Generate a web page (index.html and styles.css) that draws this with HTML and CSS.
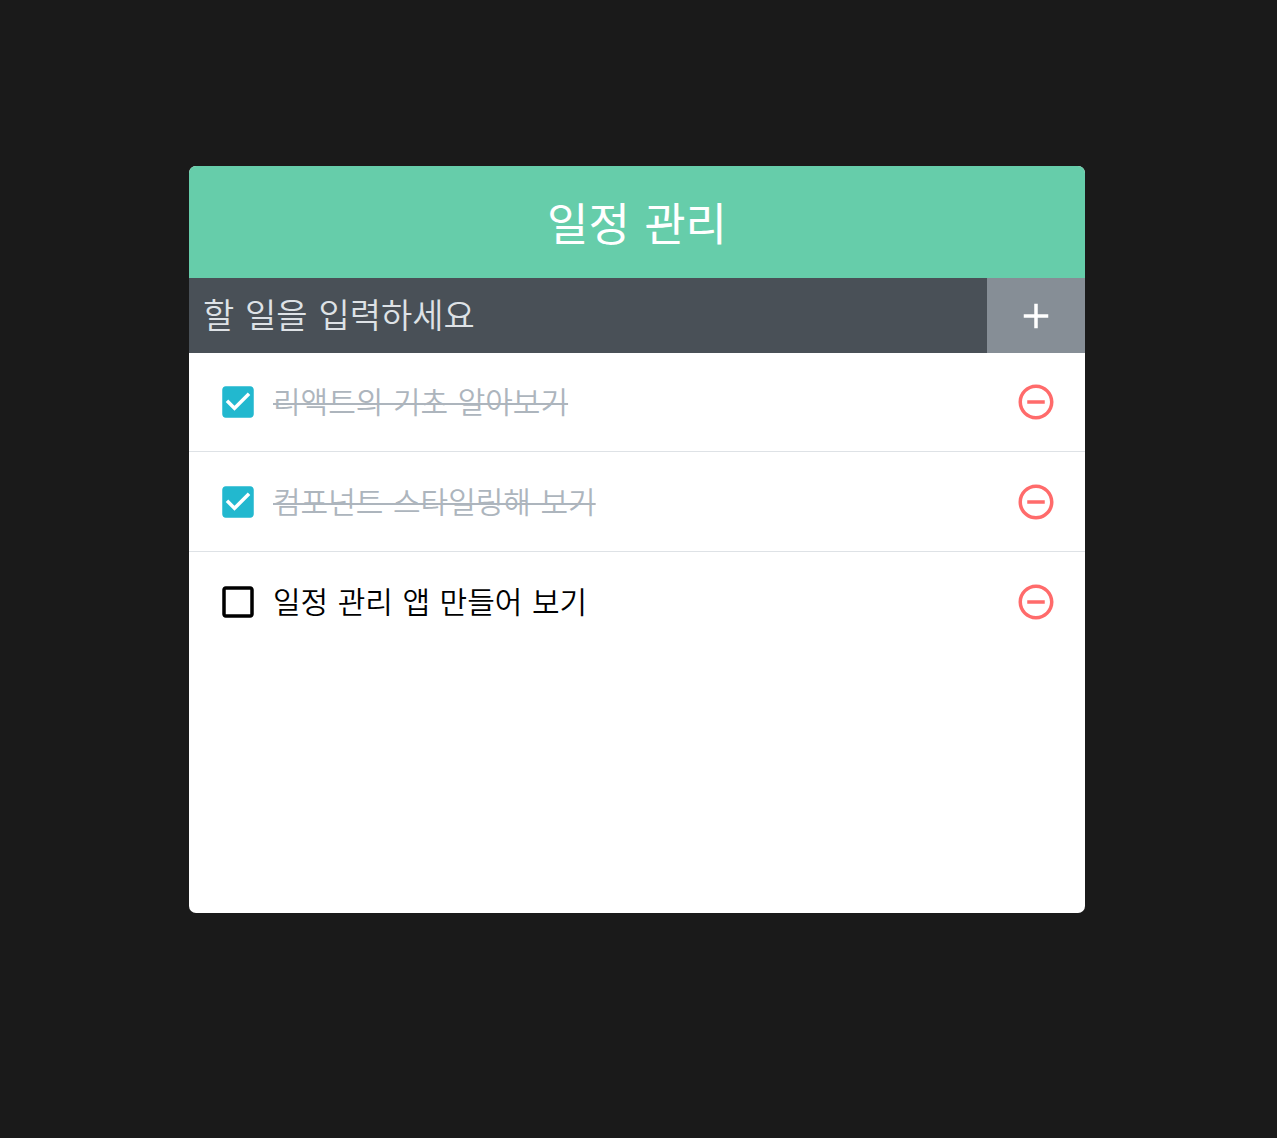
FILE: index.html
```html
<!DOCTYPE html>
<html lang="ko">
<head>
<meta charset="utf-8">
<meta name="viewport" content="width=device-width, initial-scale=1">
<title>일정 관리</title>
<link rel="stylesheet" href="styles.css">
</head>
<body>
<main class="todo-template">
  <h1 class="app-title">일정 관리</h1>
  <form class="todo-insert">
    <input class="todo-input" type="text" placeholder="할 일을 입력하세요" aria-label="할 일">
    <button class="add-button" type="button" aria-label="추가">
      <svg class="icon" viewBox="0 0 24 24" aria-hidden="true"><path d="M19 13h-6v6h-2v-6H5v-2h6V5h2v6h6v2z"/></svg>
    </button>
  </form>
  <ul class="todo-list">
    <li class="todo-item">
      <label class="todo-label">
        <span class="check">
          <input class="check-input" type="checkbox" checked>
          <svg class="icon icon-on" viewBox="0 0 24 24" aria-hidden="true"><path d="M19 3H5c-1.11 0-2 .9-2 2v14c0 1.1.89 2 2 2h14c1.11 0 2-.9 2-2V5c0-1.1-.89-2-2-2zm-9 14l-5-5 1.41-1.41L10 14.17l7.59-7.59L19 8l-9 9z"/></svg>
          <svg class="icon icon-off" viewBox="0 0 24 24" aria-hidden="true"><path d="M19 5v14H5V5h14m0-2H5c-1.1 0-2 .9-2 2v14c0 1.1.9 2 2 2h14c1.1 0 2-.9 2-2V5c0-1.1-.9-2-2-2z"/></svg>
        </span>
        <span class="text">리액트의 기초 알아보기</span>
      </label>
      <button class="remove-button" type="button" aria-label="삭제">
        <svg class="icon" viewBox="0 0 24 24" aria-hidden="true"><path d="M7 11v2h10v-2H7zm5-9C6.48 2 2 6.48 2 12s4.48 10 10 10 10-4.48 10-10S17.52 2 12 2zm0 18c-4.41 0-8-3.59-8-8s3.59-8 8-8 8 3.59 8 8-3.59 8-8 8z"/></svg>
      </button>
    </li>
    <li class="todo-item">
      <label class="todo-label">
        <span class="check">
          <input class="check-input" type="checkbox" checked>
          <svg class="icon icon-on" viewBox="0 0 24 24" aria-hidden="true"><path d="M19 3H5c-1.11 0-2 .9-2 2v14c0 1.1.89 2 2 2h14c1.11 0 2-.9 2-2V5c0-1.1-.89-2-2-2zm-9 14l-5-5 1.41-1.41L10 14.17l7.59-7.59L19 8l-9 9z"/></svg>
          <svg class="icon icon-off" viewBox="0 0 24 24" aria-hidden="true"><path d="M19 5v14H5V5h14m0-2H5c-1.1 0-2 .9-2 2v14c0 1.1.9 2 2 2h14c1.1 0 2-.9 2-2V5c0-1.1-.9-2-2-2z"/></svg>
        </span>
        <span class="text">컴포넌트 스타일링해 보기</span>
      </label>
      <button class="remove-button" type="button" aria-label="삭제">
        <svg class="icon" viewBox="0 0 24 24" aria-hidden="true"><path d="M7 11v2h10v-2H7zm5-9C6.48 2 2 6.48 2 12s4.48 10 10 10 10-4.48 10-10S17.52 2 12 2zm0 18c-4.41 0-8-3.59-8-8s3.59-8 8-8 8 3.59 8 8-3.59 8-8 8z"/></svg>
      </button>
    </li>
    <li class="todo-item">
      <label class="todo-label">
        <span class="check">
          <input class="check-input" type="checkbox">
          <svg class="icon icon-on" viewBox="0 0 24 24" aria-hidden="true"><path d="M19 3H5c-1.11 0-2 .9-2 2v14c0 1.1.89 2 2 2h14c1.11 0 2-.9 2-2V5c0-1.1-.89-2-2-2zm-9 14l-5-5 1.41-1.41L10 14.17l7.59-7.59L19 8l-9 9z"/></svg>
          <svg class="icon icon-off" viewBox="0 0 24 24" aria-hidden="true"><path d="M19 5v14H5V5h14m0-2H5c-1.1 0-2 .9-2 2v14c0 1.1.9 2 2 2h14c1.1 0 2-.9 2-2V5c0-1.1-.9-2-2-2z"/></svg>
        </span>
        <span class="text">일정 관리 앱 만들어 보기</span>
      </label>
      <button class="remove-button" type="button" aria-label="삭제">
        <svg class="icon" viewBox="0 0 24 24" aria-hidden="true"><path d="M7 11v2h10v-2H7zm5-9C6.48 2 2 6.48 2 12s4.48 10 10 10 10-4.48 10-10S17.52 2 12 2zm0 18c-4.41 0-8-3.59-8-8s3.59-8 8-8 8 3.59 8 8-3.59 8-8 8z"/></svg>
      </button>
    </li>
  </ul>
</main>
</body>
</html>
```
FILE: styles.css
```css
* {
  box-sizing: border-box;
}

body {
  margin: 0;
  padding: 166px 192px 28px 189px;
  background: #1a1a1a;
  color: #000;
  font-family: "DejaVu Sans", "Noto Sans CJK KR", sans-serif;
  font-size: 30px;
  font-weight: 350;
}

button,
input {
  margin: 0;
  border: 0;
  font: inherit;
}

button {
  display: flex;
  align-items: center;
  justify-content: center;
  cursor: pointer;
}

.icon {
  display: block;
  width: 42px;
  height: 42px;
  fill: currentColor;
}

.todo-template {
  overflow: hidden;
  border-radius: 7px;
  background: #fff;
}

.app-title {
  height: 112px;
  margin: 0;
  background: #66cdaa;
  color: #fff;
  font-size: 45px;
  font-weight: 400;
  line-height: 120px;
  text-align: center;
}

.todo-insert {
  display: flex;
  height: 75px;
  background: #495057;
}

.todo-input {
  flex: 1;
  min-width: 0;
  padding: 0 14px;
  outline: none;
  background: none;
  color: #fff;
  font-size: 34px;
  line-height: 42px;
}

.todo-input::placeholder {
  color: #dee2e6;
  opacity: 1;
}

.add-button {
  padding: 0 28px;
  background: #868e96;
  color: #fff;
}

.todo-list {
  min-height: 560px;
  margin: 0;
  padding: 0;
  list-style: none;
}

.todo-item {
  display: flex;
  align-items: center;
  min-height: 98px;
  padding: 0 28px;
}

.todo-item + .todo-item {
  min-height: 100px;
  border-top: 1px solid #dee2e6;
}

.todo-label {
  display: flex;
  flex: 1;
  align-items: center;
  gap: 14px;
  cursor: pointer;
}

.check {
  position: relative;
}

.check-input {
  position: absolute;
  inset: 0;
  width: 100%;
  height: 100%;
  opacity: 0;
}

.icon-on,
.check-input:checked ~ .icon-off {
  display: none;
}

.check-input:checked ~ .icon-on {
  display: block;
  color: #22b8cf;
}

.text {
  padding-top: 2px;
  line-height: 42px;
}

.todo-label:has(:checked) .text {
  color: #adb5bd;
  text-decoration: line-through 2px;
}

.remove-button {
  padding: 0;
  background: none;
  color: #ff6b6b;
}
```
